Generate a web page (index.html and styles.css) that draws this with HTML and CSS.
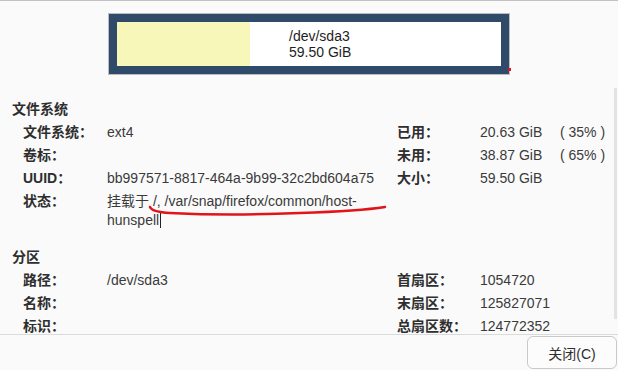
FILE: index.html
```html
<!DOCTYPE html>
<html lang="zh-CN">
<head>
<meta charset="utf-8">
<link rel="stylesheet" href="styles.css">
</head>
<body>
<div class="window">
  <div class="scroll">
    <div class="bar-wrap">
      <div class="bar-outer">
        <div class="bar">
          <div class="used" style="width:133px"></div>
          <div class="bar-text">
            <div>/dev/sda3</div>
            <div>59.50 GiB</div>
          </div>
        </div>
      </div>
    </div>

    <section class="sec sec-fs">
      <h2 class="sec-title">文件系统</h2>
      <div class="grid">
        <div class="lbl">文件系统：</div><div class="val">ext4</div>
        <div class="lbl">已用：</div><div class="val">20.63 GiB</div><div class="pct">( 35% )</div>

        <div class="lbl">卷标：</div><div class="val"></div>
        <div class="lbl">未用：</div><div class="val">38.87 GiB</div><div class="pct">( 65% )</div>

        <div class="lbl">UUID：</div><div class="val">bb997571-8817-464a-9b99-32c2bd604a75</div>
        <div class="lbl">大小：</div><div class="val">59.50 GiB</div><div class="pct"></div>

        <div class="lbl">状态：</div><div class="val span4">挂载于 /, /var/snap/firefox/common/host-<br>hunspell<span class="caret"></span></div>
      </div>
    </section>

    <section class="sec sec-part">
      <h2 class="sec-title">分区</h2>
      <div class="grid">
        <div class="lbl">路径：</div><div class="val">/dev/sda3</div>
        <div class="lbl">首扇区：</div><div class="val">1054720</div><div class="pct"></div>

        <div class="lbl">名称：</div><div class="val"></div>
        <div class="lbl">末扇区：</div><div class="val">125827071</div><div class="pct"></div>

        <div class="lbl">标识：</div><div class="val"></div>
        <div class="lbl">总扇区数：</div><div class="val">124772352</div><div class="pct"></div>
      </div>
    </section>

    <div class="scrollbar"></div>
  </div>

  <div class="footer">
    <button class="btn">关闭(C)</button>
  </div>

  <svg class="marks" width="618" height="370" viewBox="0 0 618 370">
    <path d="M150 207 Q152 212 170 213 Q230 216 300 213 Q360 211 385 207" fill="none" stroke="#e0141a" stroke-width="2.5" stroke-linecap="round"/>
    <rect x="508" y="68" width="3" height="3" fill="#e0141a"/>
  </svg>
</div>
</body>
</html>
```
FILE: styles.css
```css
* { box-sizing: border-box; }
html, body { margin: 0; padding: 0; }
body {
  background: #fafafa;
  font-family: "Liberation Sans", "Noto Sans CJK SC", sans-serif;
  font-size: 14px;
  color: #353535;
  width: 618px;
  height: 370px;
  overflow: hidden;
}
.window {
  position: relative;
  width: 618px;
  height: 370px;
  border-top: 1px solid #c2c2c2;
}
.scroll {
  position: relative;
  height: 333px;
  overflow: hidden;
}
.bar-wrap {
  display: flex;
  justify-content: center;
  padding-top: 12px;
}
.bar-outer {
  border: 1px solid #bcbcbc;
  width: 402px;
}
.bar {
  display: flex;
  border: 8px solid #304b69;
  background: #ffffff;
  height: 60px;
}
.used {
  background: #f7f7b9;
  height: 100%;
}
.bar-text {
  padding-left: 39px;
  padding-top: 6px;
  line-height: 16px;
  color: #1e1e1e;
}
.sec-title {
  margin: 0;
  font-size: 14px;
  font-weight: bold;
  line-height: 19px;
  padding-left: 12px;
  color: #2e2e2e;
}
.sec-fs { margin-top: 25px; }
.sec-part { margin-top: 18px; }
.grid {
  display: grid;
  grid-template-columns: 84px 290px 83px 80px 1fr;
  row-gap: 4px;
  padding-left: 23px;
  margin-top: 4px;
  line-height: 19px;
}
.lbl {
  font-weight: bold;
  color: #2e2e2e;
  white-space: nowrap;
}
.val { white-space: nowrap; color: #3a3a3a; }
.pct { white-space: nowrap; color: #3a3a3a; }
.span4 { grid-column: 2 / span 4; }
.caret {
  display: inline-block;
  width: 1px;
  height: 15px;
  background: #222;
  vertical-align: -3px;
  margin-left: 1px;
}
.scrollbar {
  position: absolute;
  right: 1px;
  top: 87px;
  width: 3px;
  height: 231px;
  background: #e3e3e3;
}
.footer {
  border-top: 1px solid #dadada;
  height: 36px;
  display: flex;
  justify-content: flex-end;
  padding-top: 1px;
  padding-right: 1px;
}
.btn {
  width: 90px;
  height: 33px;
  border: 1px solid #c9c9c9;
  border-radius: 6px;
  background: #fcfcfc;
  font-family: "Liberation Sans", "Noto Sans CJK SC", sans-serif;
  font-size: 14px;
  color: #2e2e2e;
  padding: 0;
}
.marks {
  position: absolute;
  left: 0;
  top: -1px;
  pointer-events: none;
}
```
